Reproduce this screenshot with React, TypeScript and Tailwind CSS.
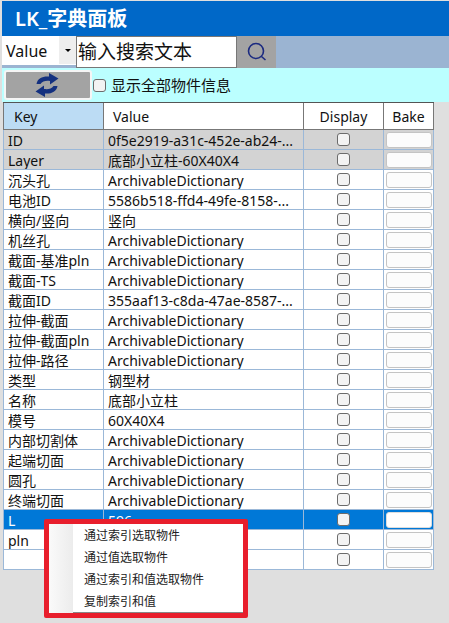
import React from 'react';

const rows: [string, string][] = [
  ['ID', '0f5e2919-a31c-452e-ab24-...'],
  ['Layer', '底部小立柱-60X40X4'],
  ['沉头孔', 'ArchivableDictionary'],
  ['电池ID', '5586b518-ffd4-49fe-8158-...'],
  ['横向/竖向', '竖向'],
  ['机丝孔', 'ArchivableDictionary'],
  ['截面-基准pln', 'ArchivableDictionary'],
  ['截面-TS', 'ArchivableDictionary'],
  ['截面ID', '355aaf13-c8da-47ae-8587-...'],
  ['拉伸-截面', 'ArchivableDictionary'],
  ['拉伸-截面pln', 'ArchivableDictionary'],
  ['拉伸-路径', 'ArchivableDictionary'],
  ['类型', '钢型材'],
  ['名称', '底部小立柱'],
  ['模号', '60X40X4'],
  ['内部切割体', 'ArchivableDictionary'],
  ['起端切面', 'ArchivableDictionary'],
  ['圆孔', 'ArchivableDictionary'],
  ['终端切面', 'ArchivableDictionary'],
  ['L', '596'],
  ['pln', ''],
  ['', ''],
];

const menu = ['通过索引选取物件', '通过值选取物件', '通过索引和值选取物件', '复制索引和值'];

const Check = () => <div className="w-[13px] h-[13px] rounded-[3px] border border-[#6b6b6b] bg-[#f3f3f3]" />;

export default function App() {
  return (
    <div className="relative w-[449px] h-[623px] bg-[#dfdfdf] overflow-hidden font-['Noto_Sans','Noto_Sans_CJK_SC',sans-serif] text-[14px] text-[#111]">
      <div className="ml-[2px] mt-[1px] h-[35px] bg-[#0068c8] pl-[13px] flex items-center text-white text-[20px] font-semibold">LK_字典面板</div>
      <div className="ml-[2px] h-[32px] flex bg-[#9bb4d2]">
        <div className="w-[74px] h-[29px] bg-white flex items-center pl-[4px] text-[16px] relative">
          Value
          <div className="absolute right-0 top-0 w-[17px] h-[28px] bg-[#eeeeee] flex items-center justify-center">
            <div className="w-0 h-0 border-x-[3px] border-x-transparent border-t-[3px] border-t-black" />
          </div>
        </div>
        <div className="w-[160px] bg-white border-l border-y border-[#777] flex items-center pl-[1px] text-[19px] leading-none">输入搜索文本</div>
        <div className="w-[40px] bg-[#a3a3a3] border-l border-[#777] flex items-center justify-center">
          <svg width="20" height="20" viewBox="0 0 20 20" fill="none" stroke="#1b2a80" strokeWidth="1.6">
            <circle cx="9" cy="9" r="7.500" />
            <path d="M14.500 14.500l4 3.500" />
          </svg>
        </div>
      </div>
      <div className="ml-[2px] h-[34px] bg-[#bbffff] flex items-center pl-[2px] gap-[1px]">
        <div className="w-[88px] h-[30px] bg-[#a3a3a3] border-2 border-[#f5f5f5] rounded-[3px] flex items-center justify-center">
          <svg className="mr-[2px]" width="24" height="24" viewBox="0 0 24 24" fill="#14307f">
            <path d="M1.500 11C2.500 5 8 3 14 3.500L14 0L23.500 5.500L15 11.500L15 8C11 7.500 7.500 8 5.500 11Z" />
            <path d="M1.500 11C2.500 5 8 3 14 3.500L14 0L23.500 5.500L15 11.500L15 8C11 7.500 7.500 8 5.500 11Z" transform="rotate(180 12 12)" />
          </svg>
        </div>
        <div className="flex items-center gap-[5px] text-[15px]">
          <Check />
          显示全部物件信息
        </div>
      </div>
      <div className="ml-[3px] w-[431px] border-t border-[#555]">
        <div className="h-[27px] flex border-l border-b border-[#777] bg-white">
          <div className="w-[100px] bg-[#bcdcf4] border-r border-[#777] pl-[10px] flex items-center">Key</div>
          <div className="w-[200px] border-r border-[#777] pl-[9px] flex items-center">Value</div>
          <div className="w-[80px] border-r border-[#777] flex items-center justify-center">Display</div>
          <div className="w-[50px] border-r border-[#777] flex items-center justify-center">Bake</div>
        </div>
        {rows.map(([key, value], i) => {
          const selected = i === 19;
          const gray = i < 2;
          return (
            <div key={i} className={`h-[20px] flex border-l border-b border-[#9bb8d8] leading-none ${selected ? 'bg-[#0078d7] text-white' : gray ? 'bg-[#d3d3d3]' : 'bg-white'}`}>
              <div className="w-[100px] border-r border-[#9bb8d8] pl-[4px] pt-[2px] flex items-center whitespace-nowrap overflow-hidden">{key}</div>
              <div className="w-[200px] border-r border-[#9bb8d8] pl-[4px] pt-[2px] flex items-center whitespace-nowrap overflow-hidden">{value}</div>
              <div className="w-[80px] border-r border-[#9bb8d8] flex items-center justify-center"><Check /></div>
              <div className="w-[50px] border-r border-[#9bb8d8] flex items-center justify-center">
                <div className={`w-[46px] h-[16px] rounded-[3px] border ${selected ? 'bg-white border-[#ddd]' : 'bg-[#fcfcfc] border-[#c4c4c4]'}`} />
              </div>
            </div>
          );
        })}
      </div>
      <div className="absolute left-[44px] top-[519px] w-[204px] h-[99px] border-[5px] border-[#e81e2c] rounded-[2px] bg-white text-[12px] shadow-[inset_0_-1px_0_#888]">
        <div className="h-full flex">
          <div className="w-[24px] h-full bg-gradient-to-r from-[#fafafa] to-[#ececec]" />
          <div className="flex-1 pl-[11px] pt-[1px] flex flex-col">
            {menu.map((m) => (
              <div key={m} className="h-[22px] flex items-center text-[#222]">{m}</div>
            ))}
          </div>
        </div>
      </div>
    </div>
  );
}
